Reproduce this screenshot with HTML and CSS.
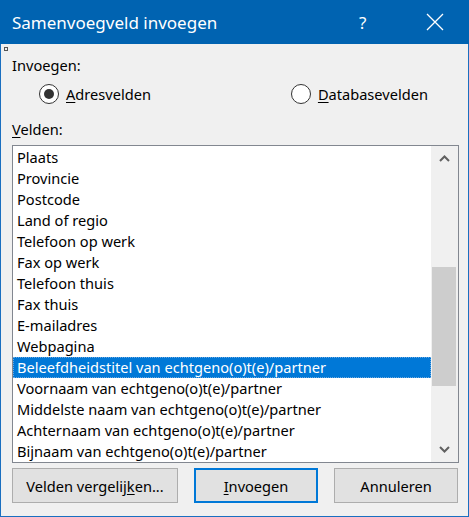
FILE: index.html
```html
<!DOCTYPE html>
<html lang="nl">
<head>
<meta charset="utf-8">
<title>Samenvoegveld invoegen</title>
<link rel="stylesheet" href="styles.css">
</head>
<body>
<div class="dialog">
  <div class="titlebar">
    <span class="title">Samenvoegveld invoegen</span>
    <span class="help">?</span>
    <svg class="close" width="18" height="18" viewBox="0 0 18 18"><path d="M1 1 L17 17 M17 1 L1 17" stroke="#fff" stroke-width="1.3" fill="none"/></svg>
  </div>
  <div class="grip"></div>
  <div class="content">
    <div class="label">Invoegen:</div>
    <div class="radios">
      <label class="radio"><span class="circle checked"></span><span><u>A</u>dresvelden</span></label>
      <label class="radio second"><span class="circle"></span><span><u>D</u>atabasevelden</span></label>
    </div>
    <div class="label velden"><u>V</u>elden:</div>
    <div class="listbox">
      <ul class="items">
        <li>Plaats</li>
        <li>Provincie</li>
        <li>Postcode</li>
        <li>Land of regio</li>
        <li>Telefoon op werk</li>
        <li>Fax op werk</li>
        <li>Telefoon thuis</li>
        <li>Fax thuis</li>
        <li>E-mailadres</li>
        <li>Webpagina</li>
        <li class="selected">Beleefdheidstitel van echtgeno(o)t(e)/partner</li>
        <li>Voornaam van echtgeno(o)t(e)/partner</li>
        <li>Middelste naam van echtgeno(o)t(e)/partner</li>
        <li>Achternaam van echtgeno(o)t(e)/partner</li>
        <li>Bijnaam van echtgeno(o)t(e)/partner</li>
      </ul>
      <div class="scrollbar">
        <div class="arrow"><svg width="11" height="7" viewBox="0 0 11 7"><path d="M1 6 L5.5 1.5 L10 6" stroke="#606060" stroke-width="2" fill="none"/></svg></div>
        <div class="track"><div class="thumb"></div></div>
        <div class="arrow"><svg width="11" height="7" viewBox="0 0 11 7"><path d="M1 1 L5.5 5.5 L10 1" stroke="#606060" stroke-width="2" fill="none"/></svg></div>
      </div>
    </div>
    <div class="buttons">
      <button class="btn wide">Velden vergelij<u>k</u>en...</button>
      <button class="btn default"><u>I</u>nvoegen</button>
      <button class="btn">Annuleren</button>
    </div>
  </div>
</div>
</body>
</html>
```
FILE: styles.css
```css
* { box-sizing: border-box; }
html, body { margin: 0; padding: 0; }
body {
  font-family: "Noto Sans", "Open Sans", sans-serif;
  font-size: 14.6px;
  color: #000;
  background: #f0f0f0;
}
.dialog {
  width: 469px;
  height: 517px;
  border: 1px solid #1a6fc0;
  border-top: none;
  background: #f0f0f0;
  position: relative;
  display: flex;
  flex-direction: column;
}
.titlebar {
  height: 44px;
  margin: 0 -1px;
  background: #0063b1;
  color: #fff;
  display: flex;
  align-items: center;
  padding-left: 12px;
}
.title {
  font-size: 17px;
  flex: 1;
}
.help {
  font-size: 17px;
  width: 20px;
  margin-right: 47px;
}
.close { margin-right: 25px; }
.grip {
  position: absolute;
  left: 3px;
  top: 47px;
  width: 4px;
  height: 4px;
  border: 1px solid #555;
}
.content {
  padding: 11px 10px 0 10px;
  display: flex;
  flex-direction: column;
}
.label {
  height: 20px;
  line-height: 20px;
  padding-left: 1px;
}
.radios {
  display: flex;
  height: 38px;
  align-items: center;
  padding-left: 28px;
}
.radio {
  display: flex;
  align-items: center;
  gap: 7px;
}
.radio.second { margin-left: 140px; }
.circle {
  width: 20px;
  height: 20px;
  border: 1px solid #333;
  border-radius: 50%;
  background: #fff;
  display: flex;
  align-items: center;
  justify-content: center;
}
.circle.checked::after {
  content: "";
  width: 10px;
  height: 10px;
  border-radius: 50%;
  background: #333;
}
.velden { margin-top: 6px; }
.listbox {
  margin-top: 6px;
  margin-left: 1px;
  width: 447px;
  height: 318px;
  border: 1px solid #828790;
  background: #fff;
  display: flex;
}
.items {
  list-style: none;
  margin: 0;
  padding: 1px 0 0 0;
  flex: 1;
}
.items li {
  height: 21px;
  line-height: 21px;
  padding-left: 4px;
  white-space: nowrap;
}
.items li.selected {
  background: #0078d7;
  color: #fff;
  outline: 1px dotted #6aa8e0;
  outline-offset: -1px;
}
.scrollbar {
  width: 27px;
  background: #f0f0f0;
  display: flex;
  flex-direction: column;
}
.arrow {
  height: 25px;
  display: flex;
  align-items: center;
  justify-content: center;
}
.track {
  flex: 1;
  padding: 96px 2px 51px 1px;
}
.thumb {
  height: 100%;
  background: #cdcdcd;
}
.buttons {
  display: flex;
  margin-top: 5px;
  margin-left: 1px;
  gap: 16px;
}
.btn {
  font-family: inherit;
  font-size: 14.6px;
  height: 35px;
  width: 124px;
  background: #e1e1e1;
  border: 1px solid #adadad;
  color: #000;
  padding: 0;
}
.btn.wide { width: 166px; }
.btn.default {
  border: 2px solid #0078d7;
}
u { text-decoration: underline; text-underline-offset: 2px; }
```
